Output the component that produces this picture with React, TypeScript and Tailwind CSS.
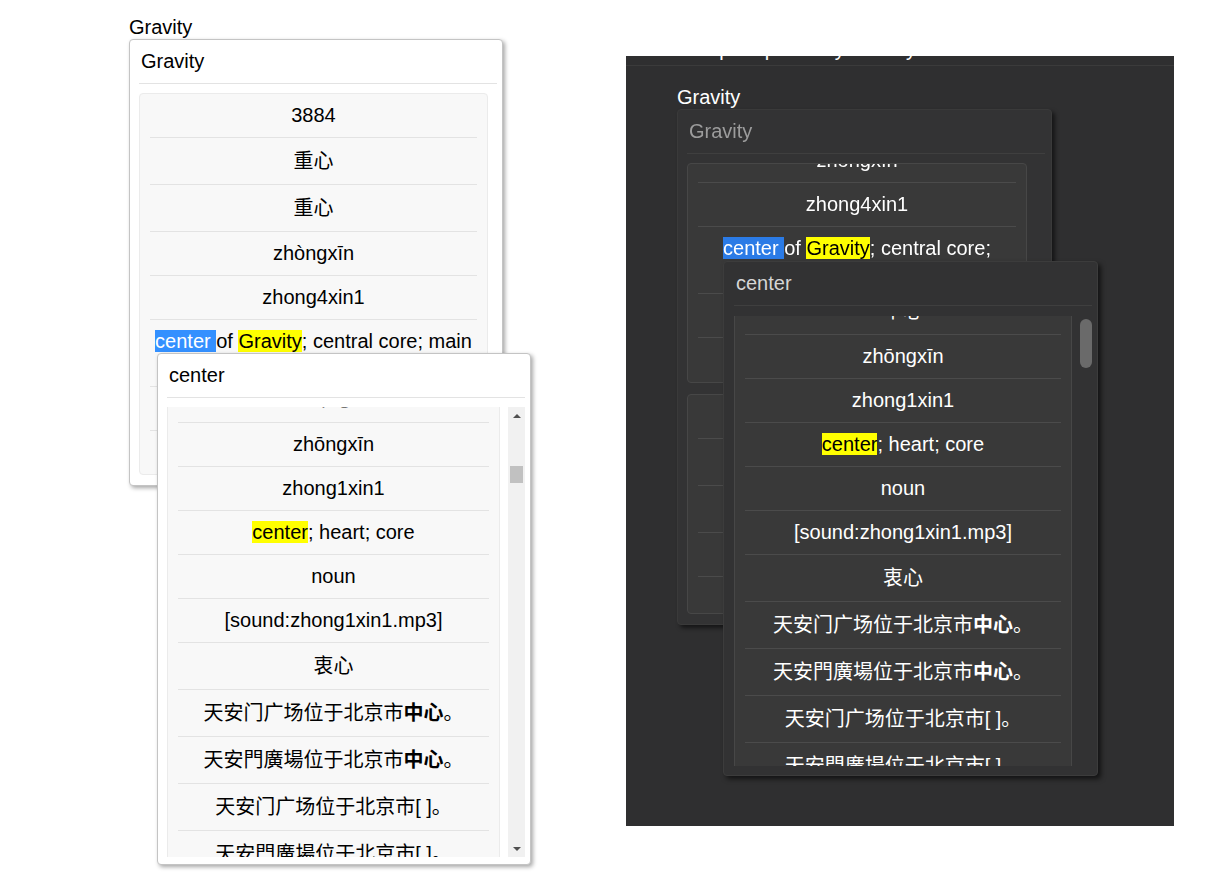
import type { ReactNode } from "react";

type Field = { h: string; body: ReactNode };

const sel = (dark: boolean) => (
  <span className={dark ? "bg-[#2b7be6] text-white" : "bg-[#3390ff] text-white"}>center </span>
);
const hl = (t: string) => <span className="bg-[#ffff00] text-black">{t}</span>;

function gravityFields(dark: boolean): Field[] {
  return [
    { h: "h-[44px]", body: "3884" },
    { h: "h-[47px]", body: "重心" },
    { h: "h-[47px]", body: "重心" },
    { h: "h-[44px]", body: "zhòngxīn" },
    { h: "h-[44px]", body: "zhong4xin1" },
    {
      h: "h-[67px]",
      body: (
        <>
          {sel(dark)}of {hl("Gravity")}; central core;{dark ? <br /> : " "}main part
        </>
      ),
    },
    { h: "h-[44px]", body: "noun" },
    { h: "h-[44px]", body: "[sound:zhong4xin1.mp3]" },
  ];
}

const centerFields: Field[] = [
  { h: "h-[44px]", body: "3885" },
  { h: "h-[47px]", body: "中心" },
  { h: "h-[47px]", body: "中心" },
  { h: "h-[44px]", body: "zhōngxīn" },
  { h: "h-[44px]", body: "zhong1xin1" },
  { h: "h-[44px]", body: <>{hl("center")}; heart; core</> },
  { h: "h-[44px]", body: "noun" },
  { h: "h-[44px]", body: "[sound:zhong1xin1.mp3]" },
  { h: "h-[47px]", body: "衷心" },
  { h: "h-[47px]", body: <>天安门广场位于北京市<b>中心</b>。</> },
  { h: "h-[47px]", body: <>天安門廣場位于北京市<b>中心</b>。</> },
  { h: "h-[47px]", body: "天安门广场位于北京市[ ]。" },
  { h: "h-[47px]", body: "天安門廣場位于北京市[ ]。" },
  { h: "h-[47px]", body: "天安门广场在北京市中心。" },
];

function Rows({ fields, dark }: { fields: Field[]; dark: boolean }) {
  return (
    <>
      {fields.map((f, i) => (
        <div
          key={i}
          className={`${f.h} shrink-0 flex items-center justify-center border-b last:border-b-0 ${
            dark ? "border-[#4b4b4b]" : "border-[#e3e3e3]"
          }`}
        >
          <div className="text-center leading-[23px]">{f.body}</div>
        </div>
      ))}
    </>
  );
}

function Box({ dark, className, children }: { dark: boolean; className: string; children: ReactNode }) {
  return (
    <div
      className={`rounded-[4px] border px-[10px] overflow-hidden flex flex-col ${
        dark ? "bg-[#393939] border-[#474747]" : "bg-[#f8f8f8] border-[#ebebeb]"
      } ${className}`}
    >
      {children}
    </div>
  );
}

function Header({ dark, text, muted }: { dark: boolean; text: string; muted?: boolean }) {
  return (
    <div
      className={`pt-[10px] pb-[10px] pl-[2px] leading-[23px] border-b ${
        dark ? "border-[#3f3f3f]" : "border-[#e3e3e3]"
      } ${muted ? "text-[#9c9c9c]" : dark ? "text-[#d6d6d6]" : "text-black"}`}
    >
      {text}
    </div>
  );
}

function LightScrollbar() {
  return (
    <div className="w-[17px] bg-[#f1f1f1] flex flex-col">
      <div className="h-[17px] flex items-center justify-center">
        <div className="w-0 h-0 border-x-[4px] border-x-transparent border-b-[4px] border-b-[#505050]" />
      </div>
      <div className="h-[42px]" />
      <div className="mx-[2px] h-[17px] bg-[#c1c1c1]" />
      <div className="flex-1" />
      <div className="h-[17px] flex items-center justify-center">
        <div className="w-0 h-0 border-x-[4px] border-x-transparent border-t-[4px] border-t-[#505050]" />
      </div>
    </div>
  );
}

function LightSide() {
  return (
    <div className="w-[374px] shrink-0">
      <div className="leading-[23px] text-black">Gravity</div>
      <div className="relative">
        <div className="w-[374px] bg-white border border-[#c4c4c4] rounded-[4px] shadow-[2px_2px_4px_rgba(0,0,0,0.35)] pl-[9px] pr-[5px] pb-[10px]">
          <Header dark={false} text="Gravity" />
          <Box dark={false} className="h-[382px] mt-[9px] mr-[9px]">
            <Rows fields={gravityFields(false)} dark={false} />
          </Box>
        </div>
        <div className="absolute left-[28px] top-[314px] w-[374px] bg-white border border-[#c4c4c4] rounded-[4px] shadow-[2px_2px_4px_rgba(0,0,0,0.35)] pl-[9px] pr-[5px] pb-[7px]">
          <Header dark={false} text="center" />
          <div className="mt-[9px] h-[450px] flex">
            <div className="flex-1 overflow-hidden">
              <Box dark={false} className="-mt-[123px] mr-[8px]">
                <Rows fields={centerFields} dark={false} />
              </Box>
            </div>
            <LightScrollbar />
          </div>
        </div>
      </div>
    </div>
  );
}

function DarkSide() {
  return (
    <div className="ml-[123px] mt-[40px] w-[548px] h-[770px] shrink-0 overflow-hidden bg-[#2f2f30] text-white">
      <div className="-mt-[18px] pl-[51px] pb-[4px] leading-[23px] border-b border-[#3b3b3b] whitespace-nowrap">
        Compare points by the day
      </div>
      <div className="mt-[20px] pl-[51px] leading-[23px]">Gravity</div>
      <div className="relative ml-[51px] w-[375px]">
        <div className="w-[375px] bg-[#333334] border border-[#3a3a3a] rounded-[4px] shadow-[3px_3px_4px_rgba(0,0,0,0.55)] pl-[9px] pr-[6px] pb-[10px]">
          <div className="blur-[0.6px]">
            <Header dark text="Gravity" muted />
            <Box dark className="h-[220px] mt-[9px] mr-[18px] justify-end">
              <Rows fields={gravityFields(true)} dark />
            </Box>
            <Box dark className="h-[220px] mt-[11px] mr-[18px]">
              <Rows fields={centerFields} dark />
            </Box>
          </div>
        </div>
        <div className="absolute left-[46px] top-[152px] w-[375px] bg-[#323233] border border-[#3c3c3c] rounded-[4px] shadow-[3px_3px_5px_rgba(0,0,0,0.6)] pl-[10px] pr-[5px] pb-[9px]">
          <Header dark text="center" />
          <div className="mt-[10px] h-[450px] flex">
            <div className="flex-1 overflow-hidden">
              <Box dark className="-mt-[120px] mr-[6px]">
                <Rows fields={centerFields} dark />
              </Box>
            </div>
            <div className="w-[14px] pl-[2px] pt-[3px]">
              <div className="h-[49px] rounded-full bg-[#6a6a6a]" />
            </div>
          </div>
        </div>
      </div>
    </div>
  );
}

export default function App() {
  return (
    <div className="min-h-[893px] bg-white flex items-start pl-[129px] pt-[16px] text-[20px] font-['Liberation_Sans','Noto_Sans_CJK_SC',sans-serif]">
      <LightSide />
      <DarkSide />
    </div>
  );
}
